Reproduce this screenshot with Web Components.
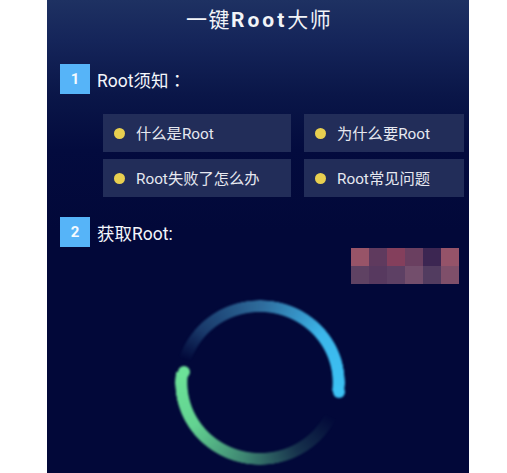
<!DOCTYPE html>
<html lang="zh">
<head>
<meta charset="utf-8">
<title>一键Root大师</title>
<style>
html, body { margin: 0; height: 100%; background: #fff; overflow: hidden; }
body { font-family: Roboto, "Noto Sans CJK SC", sans-serif; color: #f0f2f8; }
</style>
</head>
<body>
<root-page>
    <page-title slot="title">一键<b>Root</b>大师</page-title>

    <step-head n="1">Root须知<span lang="zh-Hant">：</span></step-head>
    <tip-grid>
        <tip-item>什么是Root</tip-item>
        <tip-item>为什么要Root</tip-item>
        <tip-item>Root失败了怎么办</tip-item>
        <tip-item>Root常见问题</tip-item>
    </tip-grid>

    <step-head n="2" class="second">获取Root:</step-head>
    <mosaic-block></mosaic-block>
    <progress-ring></progress-ring>
</root-page>

<script>
// ── Page shell ──────────────────────────────────────────────────────────
class RootPage extends HTMLElement {
    constructor() {
        super();
        this.attachShadow({ mode: 'open' }).innerHTML = `
            <style>
            :host {
                display: flex;
                flex-direction: column;
                box-sizing: border-box;
                width: 422px;
                height: 473px;
                margin-left: 47px;
                overflow: hidden;
                background: linear-gradient(180deg, #1e3162 0%, #15255a 40px, #0a1648 95px, #030b3e 150px, #020839 230px);
            }
            </style>
            <slot name="title"></slot>
            <slot></slot>
        `;
    }
}

class PageTitle extends HTMLElement {
    constructor() {
        super();
        this.attachShadow({ mode: 'open' }).innerHTML = `
            <style>
            :host {
                display: block;
                height: 40px;
                line-height: 40px;
                padding-left: 139px;
                font-size: 21px;
                letter-spacing: 1.5px;
                color: #f2f4f8;
                white-space: nowrap;
            }
            ::slotted(b) { font-weight: 700; letter-spacing: 3px; }
            </style>
            <slot></slot>
        `;
    }
}

// ── Numbered section heading ────────────────────────────────────────────
class StepHead extends HTMLElement {
    constructor() {
        super();
        this.attachShadow({ mode: 'open' }).innerHTML = `
            <style>
            :host {
                display: flex;
                align-items: center;
                gap: 7px;
                height: 30px;
                margin: 24px 0 0 13px;
                font-family: Roboto, "Noto Sans CJK TC", sans-serif;
                font-size: 17.5px;
                color: #f4f6fb;
            }
            :host(.second) { margin-top: 20px; }
            .num {
                width: 30px;
                height: 30px;
                background: #56b4f8;
                color: #f4faff;
                font-size: 15px;
                font-weight: 700;
                line-height: 30px;
                text-align: center;
            }
            </style>
            <span class="num"></span>
            <span><slot></slot></span>
        `;
    }
    connectedCallback() {
        this.shadowRoot.querySelector('.num').textContent = this.getAttribute('n');
    }
}

class TipGrid extends HTMLElement {
    constructor() {
        super();
        this.attachShadow({ mode: 'open' }).innerHTML = `
            <style>
            :host {
                display: grid;
                grid-template-columns: 188px 160px;
                grid-auto-rows: 38px;
                column-gap: 13px;
                row-gap: 7px;
                margin: 20px 0 0 56px;
            }
            </style>
            <slot></slot>
        `;
    }
}

class TipItem extends HTMLElement {
    constructor() {
        super();
        this.attachShadow({ mode: 'open' }).innerHTML = `
            <style>
            :host {
                display: flex;
                align-items: center;
                gap: 11px;
                padding-left: 11px;
                background: #222d59;
                font-size: 15.3px;
                color: #e6e8f0;
                white-space: nowrap;
            }
            .dot {
                width: 11px;
                height: 11px;
                border-radius: 50%;
                background: #e8cf50;
                flex: none;
            }
            .txt { margin-top: -2px; }
            </style>
            <span class="dot"></span>
            <span class="txt"><slot></slot></span>
        `;
    }
}

// ── Pixelated block covering a redacted value ───────────────────────────
const MOSAIC = [
    '#985468', '#5f3a5e', '#843f5c', '#6a3f60', '#3c2652', '#955369',
    '#5f4263', '#57395f', '#5d4064', '#734e6c', '#523c60', '#7f4f6a'
];

class MosaicBlock extends HTMLElement {
    constructor() {
        super();
        const cells = MOSAIC.map(c => `<i style="background:${c}"></i>`).join('');
        this.attachShadow({ mode: 'open' }).innerHTML = `
            <style>
            :host {
                display: grid;
                grid-template-columns: repeat(6, 18px);
                grid-auto-rows: 18px;
                align-self: flex-end;
                margin: 1px 10px 0 0;
            }
            </style>
            ${cells}
        `;
    }
}

// ── Progress ring, two fading arcs ──────────────────────────────────────
class ProgressRing extends HTMLElement {
    constructor() {
        super();
        this.attachShadow({ mode: 'open' }).innerHTML = `
            <style>
            :host {
                display: block;
                position: relative;
                flex: none;
                width: 170px;
                height: 165px;
                margin: 16px 0 0 128px;
                filter: blur(0.9px);
            }
            .arc {
                position: absolute;
                inset: 0;
                border-radius: 50%;
                background: conic-gradient(from 97deg,
                    rgba(104,216,148,0) 0deg,
                    rgba(104,216,148,0) 18deg,
                    rgba(100,205,150,.22) 55deg,
                    rgba(100,212,150,.62) 95deg,
                    rgba(104,222,150,.95) 140deg,
                    rgb(108,226,152) 180deg,
                    rgba(60,140,190,0) 180.5deg,
                    rgba(60,140,190,0) 190deg,
                    rgba(58,128,176,.42) 215deg,
                    rgba(60,138,186,.78) 265deg,
                    rgba(60,182,234,1) 315deg,
                    rgb(60,194,244) 360deg);
                -webkit-mask: radial-gradient(ellipse closest-side, transparent 85%, #000 86%, #000 99.5%, transparent 100%);
                mask: radial-gradient(ellipse closest-side, transparent 85%, #000 86%, #000 99.5%, transparent 100%);
            }
            /* round ends of the two arcs */
            .cap {
                position: absolute;
                width: 12px;
                height: 12px;
                border-radius: 50%;
            }
            .blue  { left: 157.5px; top: 86px; background: rgb(60,194,244); }
            .green { left: 2.5px; top: 66px; background: rgb(108,226,152); }
            </style>
            <div class="arc"></div>
            <div class="cap blue"></div>
            <div class="cap green"></div>
        `;
    }
}

customElements.define('root-page', RootPage);
customElements.define('page-title', PageTitle);
customElements.define('step-head', StepHead);
customElements.define('tip-grid', TipGrid);
customElements.define('tip-item', TipItem);
customElements.define('mosaic-block', MosaicBlock);
customElements.define('progress-ring', ProgressRing);
</script>
</body>
</html>
